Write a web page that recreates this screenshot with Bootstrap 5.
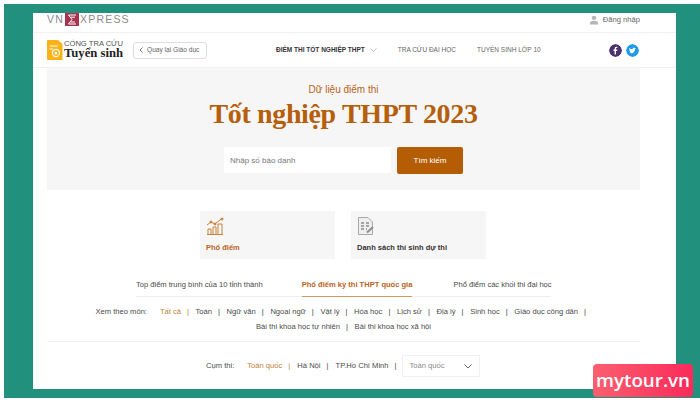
<!DOCTYPE html>
<html lang="vi">
  <head>
    <meta charset="UTF-8" />
    <title>Tra cứu điểm thi</title>
    <link href="https://cdn.jsdelivr.net/npm/bootstrap@5.3.0/dist/css/bootstrap.min.css" rel="stylesheet">
    <style>
      html, body { height: 405px; overflow: hidden; background: #fff; }
      body { font-family: "Liberation Sans", Arial, sans-serif; font-size: 7.6px; color: #4a4a4a; position: relative; }
      .page-frame { margin: 4px 0 0 4px; height: 394px; padding: 9px 24px 9px 29px; background: #21907c; }
      .page-panel { height: 376px; background: #fff; overflow: hidden; }
      .top-strip { height: 20px; padding: 0 36px 0 14px; border-bottom: 1px solid #f1f1f1; }
      .vne-logo { font-size: 10.5px; letter-spacing: 1.2px; color: #8b8b8b; line-height: 13px; }
      .vne-mark { width: 14px; height: 13px; background: #a8324f; margin: 0 1px 0 1px; }
      .login-link { font-size: 7.6px; color: #666; gap: 4px; padding-top: 1px; }
      .nav-strip { height: 35px; padding: 0 36px 0 14px; border-bottom: 1px solid #f1f1f1; }
      .brand-text { margin-left: 1px; line-height: 1; color: #333; width: 59px; }
      .brand-top { font-size: 7.6px; color: #555; white-space: nowrap; }
      .brand-main { font-family: "Liberation Serif", serif; font-weight: 700; font-size: 12.7px; white-space: nowrap; color: #222; }
      .back-btn { margin-left: 10px; width: 74px; height: 17px; font-size: 6.6px; color: #666; border: 1px solid #dedede; border-radius: 3px; padding-left: 5px; gap: 4px; white-space: nowrap; }
      .main-menu { margin-left: 69px; font-size: 6.5px; color: #666; white-space: nowrap; }
      .main-menu .is-on { font-weight: 700; color: #333; }
      .menu-chevron { margin-left: 5px; }
      .menu-gap { margin-left: 21px; }
      .social-dots { gap: 4px; margin-right: 1px; }
      .social-dot { width: 13px; height: 13px; border-radius: 50%; }
      .hero-box { margin: 0 36px 0 14px; height: 122px; background: #f6f6f6; padding-top: 15px; }
      .hero-sub { font-size: 10px; line-height: 13px; color: #b9641a; }
      .hero-title { font-family: "Liberation Serif", serif; font-weight: 700; font-size: 28px; letter-spacing: -.35px; line-height: 36px; color: #b55f0c; margin: 0 0 15px; }
      .search-row { gap: 6px; }
      .search-input { width: 167px; height: 26px; background: #fff; border: 0; border-radius: 2px; padding: 0 6px; font-size: 8px; color: #666; }
      .search-input::placeholder { color: #777; opacity: 1; }
      .search-btn { width: 66px; height: 27px; padding: 0; font-size: 8px; color: #fff; background: #b55d05; border: 0; border-radius: 2px; }
      .tile-row { margin-top: 21px; margin-left: 167px; gap: 16px; }
      .tile-box { width: 135px; height: 48px; background: #f6f6f6; padding: 6px 6px; font-size: 7.5px; font-weight: 700; color: #333; }
      .tile-box svg { display: block; margin-bottom: 7px; }
      .tile-box.is-on { color: #b9641a; }
      .tab-row { margin: 20px 0 0 103px; width: 415px; gap: 39px; height: 18px; border-bottom: 1px solid #eee; font-size: 7.55px; white-space: nowrap; }
      .tab-item { height: 18px; line-height: 12px; }
      .tab-item.is-on { font-weight: 700; color: #b9641a; border-bottom: 1px solid #cf9a5c; margin-right: 2px; }
      .filter-row { margin: 7px 36px 0 14px; padding: 0 6px 7px 0; border-bottom: 1px solid #f1f1f1; line-height: 15px; text-align: center; }
      .filter-row-first { padding-left: 5px; }
      .filter-row-second { padding-left: 6px; }
      .filter-label { margin-right: 11px; }
      .pipe-link { white-space: nowrap; }
      .pipe-link::after { content: "|"; margin: 0 4.5px 0 6px; }
      .pipe-link.is-on { color: #c2803d; }
      .area-row { margin: 13px 0 0 173px; height: 22px; }
      .area-row .filter-label { margin-right: 13px; }
      .area-row .pipe-link::after { margin: 0 7px 0 6px; }
      .area-select { width: 78px; height: 22px; margin-left: -2px; border: 1px solid #f0f0f0; padding: 0 7px; color: #8a8a8a; }
      .brand-badge { position: absolute; left: 593px; top: 364px; width: 100px; height: 33px; border-radius: 4px; background: linear-gradient(90deg, #fb5f6f, #fb2a5b); color: #fff; font-family: "Open Sans", sans-serif; font-size: 18.8px; font-weight: 600; line-height: 32px; text-align: center; white-space: nowrap; }
    </style>
  </head>
  <body>
    <div class="page-frame">
      <div class="page-panel">
        <div class="top-strip d-flex justify-content-between align-items-start">
          <div class="vne-logo d-flex align-items-center">
            <span>VN</span>
            <span class="vne-mark d-inline-flex align-items-center justify-content-center">
              <svg width="10" height="11" viewBox="0 0 10 11" fill="none" stroke="#fff" stroke-width="1"><path d="M9 1H1.5L5 5.5 1.5 10H9M3.5 3.2H8M3.5 8H8"/></svg>
            </span>
            <span>XPRESS</span>
          </div>
          <div class="login-link d-flex align-items-center">
            <svg width="10" height="10" viewBox="0 0 11 10" fill="#b5b5b5"><circle cx="5.5" cy="2.6" r="2.4"/><path d="M1 10V8.2C1 6.6 3 5.8 5.5 5.8S10 6.6 10 8.2V10Z"/></svg>
            <span>Đăng nhập</span>
          </div>
        </div>

        <div class="nav-strip d-flex align-items-center">
          <svg width="16" height="20" viewBox="0 0 16 20">
            <path d="M1 0H11L15.500 4V20H1Q0 20 0 19V1Q0 0 1 0Z" fill="#fbb216"/>
            <path d="M2.500 6H11M2.500 9H6" stroke="#fff" stroke-width="1"/>
            <circle cx="9" cy="13" r="3.600" fill="none" stroke="#fff" stroke-width="1.200"/>
            <circle cx="9" cy="13" r="1.500" fill="#fff"/>
            <path d="M11.500 15.500L15 19" stroke="#fbb216" stroke-width="1.500"/>
          </svg>
          <div class="brand-text">
            <div class="brand-top">CỔNG TRA CỨU</div>
            <div class="brand-main">Tuyển sinh</div>
          </div>
          <div class="back-btn d-flex align-items-center">
            <svg width="4" height="6" viewBox="0 0 4 6" fill="none" stroke="#777" stroke-width="1"><path d="M3.500 .5L1 3l2.500 2.500"/></svg>
            <span>Quay lại Giáo dục</span>
          </div>
          <div class="main-menu d-flex align-items-center">
            <span class="is-on">ĐIỂM THI TỐT NGHIỆP THPT</span>
            <svg class="menu-chevron" width="7" height="4" viewBox="0 0 7 4" fill="none" stroke="#aaa" stroke-width=".8"><path d="M.5 .5L3.500 3.500 6.500 .5"/></svg>
            <span class="menu-gap">TRA CỨU ĐẠI HỌC</span>
            <span class="menu-gap">TUYỂN SINH LỚP 10</span>
          </div>
          <div class="social-dots ms-auto d-flex align-items-center">
            <svg class="social-dot" viewBox="0 0 13 13"><circle cx="6.500" cy="6.500" r="6.500" fill="#4a3270"/><path d="M7 10.500V7h1.200l.2-1.400H7v-.8c0-.4.1-.7.7-.7h.7V2.900C8.200 2.900 7.800 2.800 7.400 2.800 6.300 2.800 5.600 3.500 5.600 4.700v.9H4.500V7h1.100v3.500Z" fill="#fff"/></svg>
            <svg class="social-dot" viewBox="0 0 13 13"><circle cx="6.500" cy="6.500" r="6.500" fill="#1f9bea"/><path d="M10 4.500c-.3.100-.5.200-.8.200.3-.2.500-.4.600-.8-.3.200-.6.300-.9.400-.6-.6-1.500-.6-2 0-.4.400-.5.800-.4 1.300C5.300 5.500 4.200 5 3.500 4.100c-.4.600-.2 1.500.4 1.900-.2 0-.4-.1-.6-.2 0 .7.500 1.200 1.100 1.400-.2 0-.4.100-.6 0 .2.500.7.900 1.300.9-.5.400-1.200.6-1.900.5 1.900 1.200 5.800.7 5.800-3.900.4-.2.700-.5 1-.7Z" fill="#fff"/></svg>
          </div>
        </div>

        <div class="hero-box text-center">
          <div class="hero-sub">Dữ liệu điểm thi</div>
          <h1 class="hero-title">Tốt nghiệp THPT 2023</h1>
          <div class="search-row d-flex justify-content-center align-items-start">
            <input class="search-input" type="text" placeholder="Nhập số báo danh">
            <button class="btn search-btn" type="button">Tìm kiếm</button>
          </div>
        </div>

        <div class="tile-row d-flex">
          <div class="tile-box is-on">
            <svg width="18" height="18" viewBox="0 0 18 18" fill="none" stroke="#c9803a" stroke-width="1">
              <path d="M1 8L5 5 9 7 16 1.500"/>
              <circle cx="5" cy="5" r="1" fill="#c9803a"/><circle cx="9" cy="7" r="1" fill="#c9803a"/><circle cx="16" cy="2" r="1" fill="#c9803a"/>
              <path d="M1 17.500H17M2 17V12H5V17M7 17V10H10V17M12 17V7H16V17"/>
            </svg>
            Phổ điểm
          </div>
          <div class="tile-box">
            <svg width="18" height="18" viewBox="0 0 18 18" fill="none" stroke="#a9a9a9" stroke-width="1">
              <path d="M1.500 .5H11L15.500 5V17.500H1.500Z" fill="#eee"/>
              <path d="M4 6H7M9 6H12M4 9H7M9 9H12M4 12H7M9 12H10" stroke="#8d8d8d" stroke-width="1.300"/>
              <path d="M10 15.500L16 10" stroke="#8d8d8d" stroke-width="2"/>
            </svg>
            Danh sách thí sinh dự thi
          </div>
        </div>

        <div class="tab-row d-flex align-items-start">
          <span class="tab-item">Top điểm trung bình của 10 tỉnh thành</span>
          <span class="tab-item is-on">Phổ điểm kỳ thi THPT quốc gia</span>
          <span class="tab-item">Phổ điểm các khối thi đại học</span>
        </div>

        <div class="filter-row">
          <div class="filter-row-first">
            <span class="filter-label">Xem theo môn:</span>
            <span class="pipe-link is-on">Tất cả</span>
            <span class="pipe-link">Toán</span>
            <span class="pipe-link">Ngữ văn</span>
            <span class="pipe-link">Ngoại ngữ</span>
            <span class="pipe-link">Vật lý</span>
            <span class="pipe-link">Hóa học</span>
            <span class="pipe-link">Lịch sử</span>
            <span class="pipe-link">Địa lý</span>
            <span class="pipe-link">Sinh học</span>
            <span class="pipe-link">Giáo dục công dân</span>
          </div>
          <div class="filter-row-second">
            <span class="pipe-link">Bài thi khoa học tự nhiên</span>
            <span>Bài thi khoa học xã hội</span>
          </div>
        </div>

        <div class="area-row d-flex align-items-center">
          <span class="filter-label">Cụm thi:</span>
          <span class="pipe-link is-on">Toàn quốc</span>
          <span class="pipe-link">Hà Nội</span>
          <span class="pipe-link">TP.Hồ Chí Minh</span>
          <div class="area-select d-flex align-items-center justify-content-between">
            <span>Toàn quốc</span>
            <svg width="8" height="5" viewBox="0 0 8 5" fill="none" stroke="#666" stroke-width="1"><path d="M.5 .5L4 4 7.500 .5"/></svg>
          </div>
        </div>
      </div>
    </div>
    <div class="brand-badge">mytour.vn</div>
    <script src="https://cdn.jsdelivr.net/npm/bootstrap@5.3.0/dist/js/bootstrap.bundle.min.js"></script>
  </body>
</html>
